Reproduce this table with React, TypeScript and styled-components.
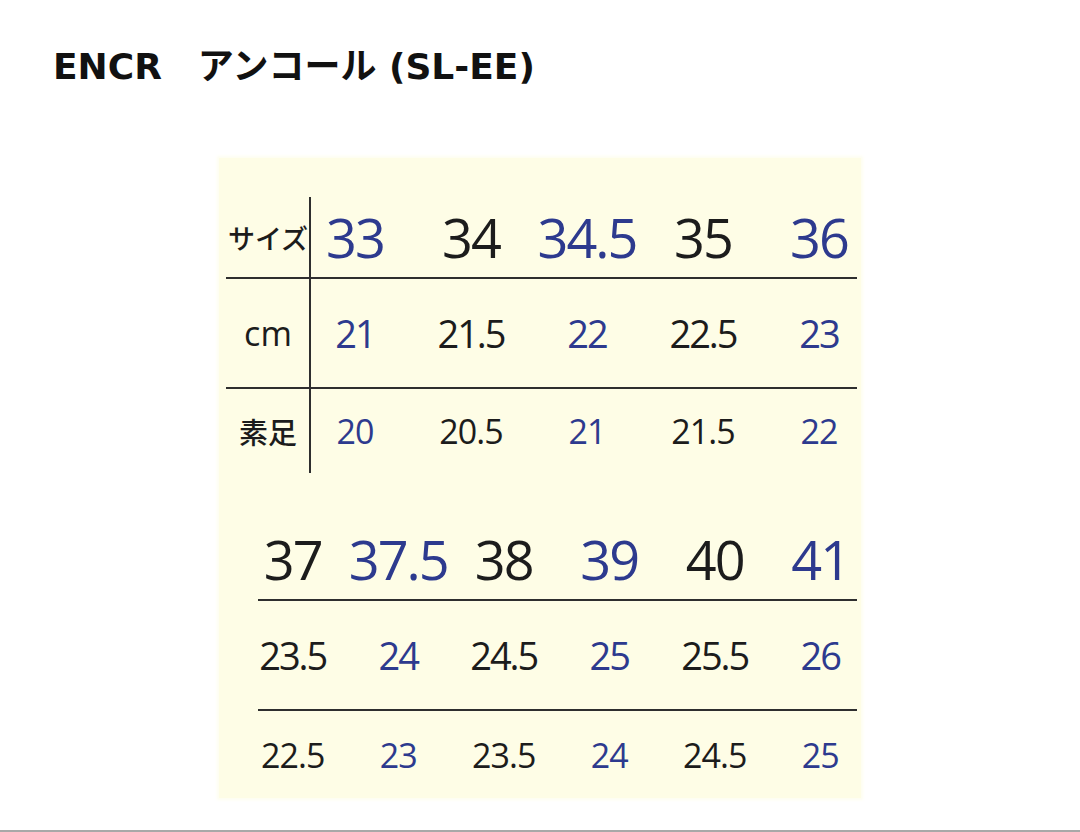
import React, { FC } from 'react';
import styled, { createGlobalStyle } from 'styled-components';

const GlobalStyle = createGlobalStyle`
  html, body {
    margin: 0;
    padding: 0;
    background: #ffffff;
  }
`;

const BLUE = '#2d3a8e';
const INK = '#1c1c1c';
const LINE = '#2e2e2e';

const Page = styled.div`
  box-sizing: border-box;
  height: 832px;
  padding: 47px 0 0;
  border-bottom: 2px solid #a8a8a8;
  overflow: hidden;
`;

const Title = styled.h1`
  margin: 0 0 71px;
  padding-left: 53px;
  height: 40px;
  font-family: 'DejaVu Sans', 'Noto Sans CJK JP', sans-serif;
  font-size: 36px;
  line-height: 40px;
  font-weight: 700;
  color: #111111;
  white-space: pre;
`;

const Chart = styled.div`
  width: 642px;
  height: 640px;
  margin: 0 auto;
  padding-top: 39px;
  box-sizing: border-box;
  background: #fefde6;
  box-shadow: 0 0 3px 2px #fefef0;
`;

const Row = styled.div<{ $h: number; $cols: string; $pad?: number }>`
  display: grid;
  grid-template-columns: ${(p) => p.$cols};
  height: ${(p) => p.$h}px;
  padding-left: ${(p) => p.$pad || 0}px;
  align-items: stretch;
`;

const Label = styled.div<{ $size: number; $latin?: boolean }>`
  display: flex;
  align-items: center;
  justify-content: center;
  padding-left: 8px;
  border-right: 2px solid ${LINE};
  font-family: ${(p) => (p.$latin ? "'Open Sans', sans-serif" : "'Noto Sans CJK JP', sans-serif")};
  font-size: ${(p) => p.$size}px;
  font-weight: ${(p) => (p.$latin ? 400 : 500)};
  line-height: 1;
  color: ${INK};
  white-space: nowrap;
`;

const Cell = styled.div<{ $size: number; $blue?: boolean; $shift?: number }>`
  display: flex;
  align-items: center;
  justify-content: center;
  padding-right: ${(p) => p.$shift || 0}px;
  font-family: 'Open Sans', sans-serif;
  font-size: ${(p) => p.$size}px;
  letter-spacing: ${(p) => (p.$size > 36 ? -2 : -1)}px;
  line-height: 1;
  color: ${(p) => (p.$blue ? BLUE : INK)};
  white-space: nowrap;
`;

const Rule = styled.div<{ $left: number }>`
  height: 2px;
  margin: 0 4px 0 ${(p) => p.$left}px;
  background: ${LINE};
`;

const Gap = styled.div`
  height: 46px;
`;

const top = {
  size: ['33', '34', '34.5', '35', '36'],
  cm: ['21', '21.5', '22', '22.5', '23'],
  bare: ['20', '20.5', '21', '21.5', '22'],
};

const bottom = {
  size: ['37', '37.5', '38', '39', '40', '41'],
  cm: ['23.5', '24', '24.5', '25', '25.5', '26'],
  bare: ['22.5', '23', '23.5', '24', '24.5', '25'],
};

const TOP_COLS = '92px repeat(5, 116px)';
const BOTTOM_COLS = 'repeat(6, 105.5px)';

interface TopRowProps {
  label: string;
  latin?: boolean;
  labelSize: number;
  values: string[];
  size: number;
  h: number;
}

const TopRow: FC<TopRowProps> = ({ label, latin, labelSize, values, size, h }) => (
  <Row $h={h} $cols={TOP_COLS}>
    <Label $size={labelSize} $latin={latin}>
      {label}
    </Label>
    {values.map((v, i) => (
      <Cell key={v + i} $size={size} $blue={i % 2 === 0} $shift={28}>
        {v}
      </Cell>
    ))}
  </Row>
);

const BottomRow: FC<{ values: string[]; size: number; h: number }> = ({ values, size, h }) => (
  <Row $h={h} $cols={BOTTOM_COLS} $pad={21}>
    {values.map((v, i) => (
      <Cell key={v + i} $size={size} $blue={i % 2 === 1}>
        {v}
      </Cell>
    ))}
  </Row>
);

const App: FC = () => {
  return (
    <Page>
      <GlobalStyle />
      <Title>{'ENCR\u3000アンコール (SL-EE)'}</Title>
      <Chart>
        <TopRow label='サイズ' labelSize={27} values={top.size} size={54} h={80} />
        <Rule $left={7} />
        <TopRow label='cm' latin labelSize={34} values={top.cm} size={38} h={108} />
        <Rule $left={7} />
        <TopRow label='素足' labelSize={29} values={top.bare} size={34} h={84} />
        <Gap />
        <BottomRow values={bottom.size} size={54} h={80} />
        <Rule $left={39} />
        <BottomRow values={bottom.cm} size={38} h={108} />
        <Rule $left={39} />
        <BottomRow values={bottom.bare} size={34} h={87} />
      </Chart>
    </Page>
  );
};

export default App;
